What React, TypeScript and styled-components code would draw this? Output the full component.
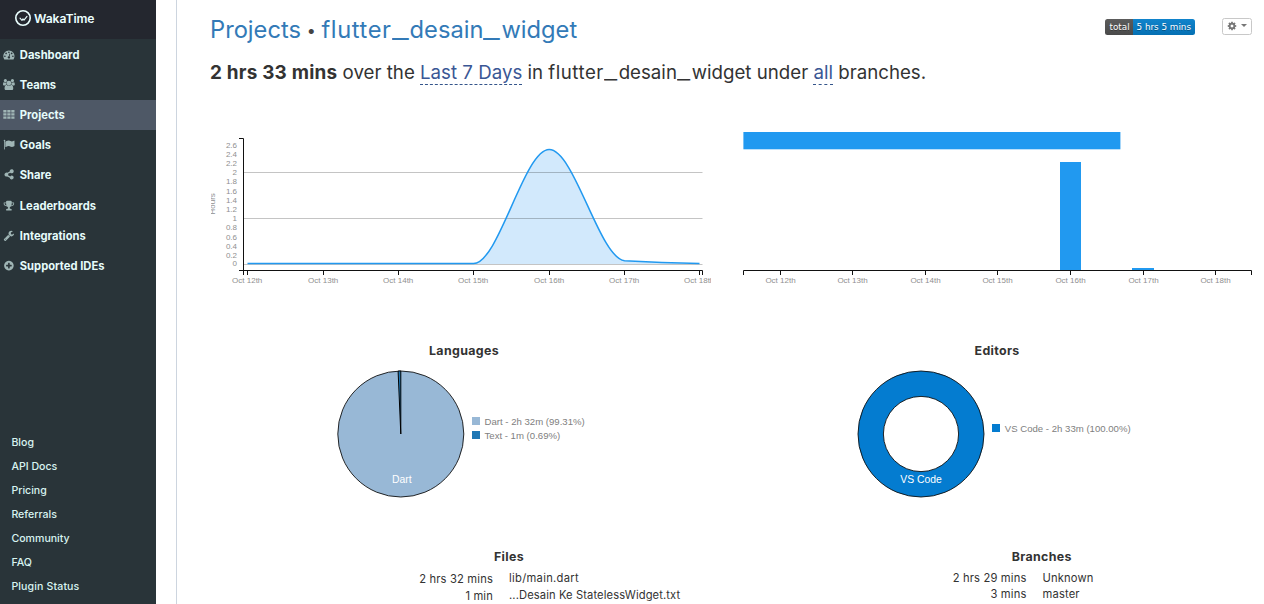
import React from 'react';
import styled, { createGlobalStyle } from 'styled-components';

const GlobalStyle = createGlobalStyle`
  * { box-sizing: border-box; }
  body { margin: 0; background: #fff; overflow: hidden; }
  a { color: inherit; text-decoration: none; }
`;

const Page = styled.div`
  display: flex;
  width: 1264px;
  height: 604px;
  overflow: hidden;
  font-family: Inter, "Liberation Sans", sans-serif;
  color: #333;
  white-space: nowrap;
`;

/* ---------- sidebar ---------- */

const Sidebar = styled.aside`
  display: flex;
  flex-direction: column;
  width: 156px;
  margin-right: 20px;
  background: #293439;
`;

const Brand = styled.a`
  display: flex;
  align-items: center;
  gap: 3px;
  height: 39px;
  padding: 0 0 3px 15px;
  background: #24272f;
  color: #ebffff;
  font-size: 12.2px;
  font-weight: 600;
  letter-spacing: -0.1px;
  svg { display: block; }
`;

const Nav = styled.nav`
  display: flex;
  flex-direction: column;
  flex: 1;
  padding-top: 0.6px;
`;

const NavItem = styled.a<{ $active?: boolean }>`
  display: flex;
  align-items: center;
  gap: 5px;
  height: 30.2px;
  padding-left: 3px;
  background: ${p => (p.$active ? '#4e5866' : 'transparent')};
  color: #e6fcfb;
  font-size: 11.2px;
  font-weight: 700;
  svg { display: block; width: 11.8px; height: 11.2px; margin-bottom: 1px; fill: #9fb5b5; }
`;

const FootNav = styled.nav`
  display: flex;
  flex-direction: column;
  padding: 0 0 5px 11.4px;
`;

const FootLink = styled.a<{ $spacing?: number }>`
  height: 24px;
  line-height: 24px;
  color: #d8f3f0;
  font-size: 10.6px;
  font-weight: 500;
  letter-spacing: ${p => p.$spacing ?? 0}px;
`;

/* ---------- header ---------- */

const Main = styled.main`
  flex: 1;
  min-width: 0;
  padding: 0 0 0 33px;
  border-left: 1px solid #cdd5df;
`;

const Header = styled.header`
  display: flex;
  align-items: flex-start;
  height: 57px;
  padding: 15px 12px 0 0;
`;

const Title = styled.h1`
  flex: 1;
  margin: 0;
  color: #337ab7;
  font-size: 23.7px;
  line-height: 30px;
  font-weight: 400;
`;

const Bullet = styled.span`
  display: inline-block;
  width: 20.5px;
  color: #444;
  font-size: 16px;
  line-height: 20px;
  text-align: center;
  vertical-align: 2px;
`;

const Underscore = styled.span<{ $width: number }>`
  display: inline-block;
  width: ${p => p.$width}px;
  height: 1em;
  line-height: 1em;
  transform: scaleX(1.55);
  transform-origin: 0 50%;
`;

const Spaced = styled.span<{ $gap: number }>`
  letter-spacing: ${p => p.$gap}px;
`;

const Badge = styled.span`
  display: flex;
  height: 16px;
  margin: 4px 27px 0 0;
  overflow: hidden;
  border-radius: 2.5px;
  font: 8.8px/16px "DejaVu Sans", sans-serif;
  color: #fff;
  text-shadow: 0 1px 0 rgba(1, 1, 1, 0.3);
`;

const BadgePart = styled.span<{ $value?: boolean }>`
  width: ${p => (p.$value ? 62 : 28)}px;
  padding-left: ${p => (p.$value ? 3.5 : 4.5)}px;
  background: ${p => (p.$value ? 'linear-gradient(#1184cc, #0570b3)' : 'linear-gradient(#5c5c5c, #4a4a4a)')};
`;

const SettingsButton = styled.button`
  display: flex;
  align-items: center;
  justify-content: space-between;
  width: 30px;
  height: 17px;
  margin-top: 3px;
  padding: 0 4px 2px;
  border: 1px solid #c8c8c8;
  border-radius: 2.5px;
  background: #fff;
  svg { display: block; fill: #777; }
`;

const Caret = styled.span`
  border: 3.4px solid transparent;
  border-top-color: #777;
  border-bottom: 0;
`;

const Summary = styled.h2`
  height: 63px;
  margin: 0;
  font-size: 18.7px;
  line-height: 32px;
  font-weight: 400;
`;

const Total = styled.strong`
  font-size: 18.9px;
  font-weight: 700;
  letter-spacing: 0.22px;
`;

const Choice = styled.a`
  display: inline-block;
  height: 25px;
  line-height: 25px;
  border-bottom: 1px dashed #34558b;
  color: #3a5795;
`;

/* ---------- charts ---------- */

const ChartRow = styled.section`
  display: flex;
  height: 220px;
  padding-left: 1px;
  svg { display: block; }
`;

const PieRow = styled.section`
  display: flex;
  gap: 16px;
  height: 206px;
`;

const PiePanel = styled.div<{ $width: number }>`
  width: ${p => p.$width}px;
  svg { display: block; margin-top: 7px; }
`;

const PanelTitle = styled.h3<{ $shift?: number }>`
  margin: 0;
  padding-left: ${p => p.$shift ?? 0}px;
  font-size: 12.4px;
  line-height: 21px;
  font-weight: 700;
  letter-spacing: 0.35px;
`;

const AxisText = styled.text`
  font: 8px "Liberation Sans", Arial, sans-serif;
  fill: #8f8f8f;
`;

const LegendText = styled.text`
  font: 9.6px "Liberation Sans", Arial, sans-serif;
  fill: #808080;
`;

const SliceText = styled.text`
  font: 10.4px "Liberation Sans", Arial, sans-serif;
  fill: #fff;
  text-anchor: middle;
`;

/* ---------- tables ---------- */

const TableRow = styled.section`
  display: flex;
`;

const TablePanel = styled.div<{ $width: number }>`
  width: ${p => p.$width}px;
`;

const Columns = styled.div<{ $time: number }>`
  display: grid;
  grid-template-columns: ${p => p.$time}px auto;
  column-gap: 16px;
  justify-content: start;
`;

const Cells = styled.div<{ $pitch: number; $top: number; $right?: boolean }>`
  padding-top: ${p => p.$top}px;
  font-size: 11.2px;
  line-height: ${p => p.$pitch}px;
  letter-spacing: 0.16px;
  text-align: ${p => (p.$right ? 'right' : 'left')};
`;

const Icon = ({ d, vb = '0 0 1792 1792' }: { d: string; vb?: string }) => (
  <svg viewBox={vb}><path d={d} /></svg>
);

const icons = {
  dashboard: 'M384 1152q0-53-37.5-90.5t-90.5-37.5-90.5 37.5-37.5 90.5 37.5 90.5 90.5 37.5 90.5-37.5 37.5-90.5zm192-448q0-53-37.5-90.5t-90.5-37.5-90.5 37.5-37.5 90.5 37.5 90.5 90.5 37.5 90.5-37.5 37.5-90.5zm428 481l101-382q6-26-7.5-48.5t-38.5-29.5-48 6.5-30 39.5l-101 382q-60 5-107 43.5t-63 98.5q-20 77 20 146t117 89 146-20 89-117q16-60-6-117t-72-91zm660-33q0-53-37.5-90.5t-90.5-37.5-90.5 37.5-37.5 90.5 37.5 90.5 90.5 37.5 90.5-37.5 37.5-90.5zm-640-640q0-53-37.5-90.5t-90.5-37.5-90.5 37.5-37.5 90.5 37.5 90.5 90.5 37.5 90.5-37.5 37.5-90.5zm448 192q0-53-37.5-90.5t-90.5-37.5-90.5 37.5-37.5 90.5 37.5 90.5 90.5 37.5 90.5-37.5 37.5-90.5zm320 448q0 261-141 483-19 29-54 29h-1402q-35 0-54-29-141-221-141-483 0-182 71-348t191-286 286-191 348-71 348 71 286 191 191 286 71 348z',
  users: 'M593 896q-162 5-265 128h-134q-82 0-138-40.5t-56-118.5q0-353 124-353 6 0 43.5 21t97.5 42.5 119 21.5q67 0 133-23-5 37-5 66 0 139 81 256zm1071 637q0 120-73 189.5t-194 69.5h-874q-121 0-194-69.5t-73-189.5q0-53 3.5-103.5t14-109 26.5-108.5 43-97.5 62-81 85.5-53.5 111.5-20q10 0 43 21.5t73 48 107 48 135 21.5 135-21.5 107-48 73-48 43-21.5q61 0 111.5 20t85.5 53.5 62 81 43 97.5 26.5 108.5 14 109 3.5 103.5zm-1024-1277q0 106-75 181t-181 75-181-75-75-181 75-181 181-75 181 75 75 181zm704 384q0 159-112.5 271.5t-271.5 112.5-271.5-112.5-112.5-271.5 112.5-271.5 271.5-112.5 271.5 112.5 112.5 271.5zm576 225q0 78-56 118.5t-138 40.5h-134q-103-123-265-128 81-117 81-256 0-29-5-66 66 23 133 23 59 0 119-21.5t97.5-42.5 43.5-21q124 0 124 353zm-128-609q0 106-75 181t-181 75-181-75-75-181 75-181 181-75 181 75 75 181z',
  grid: 'M0 160h512v384H0zM640 160h512v384H640zM1280 160h512v384h-512zM0 672h512v384H0zM640 672h512v384H640zM1280 672h512v384h-512zM0 1184h512v384H0zM640 1184h512v384H640zM1280 1184h512v384h-512z',
  flag: 'M320 256q0 72-64 110v1266q0 13-9.5 22.5t-22.5 9.5h-64q-13 0-22.5-9.5t-9.5-22.5v-1266q-64-38-64-110 0-53 37.5-90.5t90.5-37.5 90.5 37.5 37.5 90.5zm1472 64v763q0 25-12.5 38.5t-39.5 27.5q-215 116-369 116-61 0-123.5-22t-108.5-48-115.5-48-142.5-22q-192 0-464 146-17 9-33 9-26 0-45-19t-19-45v-742q0-32 31-55 21-14 79-43 236-120 421-120 107 0 200 29t219 88q38 19 88 19 54 0 117.5-21t110-47 88-47 54.5-21q26 0 45 19t19 45z',
  share: 'M1344 1024a320 320 0 1 1-317 366l-398-199a320 320 0 1 1 0-590l398-199a320 320 0 1 1 96 190l-360 180a320 320 0 0 1 0 248l360 180q92-176 221-176z',
  trophy: 'M522 883q-74-162-74-371h-256v96q0 78 94.5 162t235.5 113zm1078-275v-96h-256q0 209-74 371 141-29 235.5-113t94.5-162zm128-128v128q0 71-41.5 143t-112 130-173 97.5-215.5 44.5q-42 54-95 95-38 34-52.5 72.5t-14.5 89.5q0 54 30.5 91t97.5 37q75 0 133.5 45.5t58.5 114.5v64q0 14-9 23t-23 9h-832q-14 0-23-9t-9-23v-64q0-69 58.5-114.5t133.5-45.5q67 0 97.5-37t30.5-91q0-51-14.5-89.5t-52.5-72.5q-53-41-95-95-113-5-215.5-44.5t-173-97.5-112-130-41.5-143v-128q0-40 28-68t68-28h288v-96q0-66 47-113t113-47h576q66 0 113 47t47 113v96h288q40 0 68 28t28 68z',
  wrench: 'M448 1472q0-26-19-45t-45-19-45 19-19 45 19 45 45 19 45-19 19-45zm644-420l-682 682q-37 37-90 37-52 0-91-37l-106-108q-38-36-38-90 0-53 38-91l681-681q39 98 114.5 173.5t173.5 114.5zm634-435q0 39-23 106-47 134-164.5 217.5t-258.5 83.5q-185 0-316.5-131.5t-131.5-316.5 131.5-316.5 316.5-131.5q58 0 121.5 16.5t107.5 46.5q16 11 16 28t-16 28l-293 169v224l193 107q5-3 79-48.5t135.5-81 70.5-35.5q15 0 23.5 10t8.5 25z',
  plus: 'M1344 960v-128q0-26-19-45t-45-19h-256v-256q0-26-19-45t-45-19h-128q-26 0-45 19t-19 45v256h-256q-26 0-45 19t-19 45v128q0 26 19 45t45 19h256v256q0 26 19 45t45 19h128q26 0 45-19t19-45v-256h256q26 0 45-19t19-45zm320-64q0 209-103 385.5t-279.5 279.5-385.5 103-385.5-103-279.5-279.5-103-385.5 103-385.5 279.5-279.5 385.5-103 385.5 103 279.5 279.5 103 385.5z',
  cog: 'M1152 896q0-106-75-181t-181-75-181 75-75 181 75 181 181 75 181-75 75-181zm512-109v222q0 12-8 23t-20 13l-185 28q-19 54-39 91 35 50 107 138 10 12 10 25t-9 23q-27 37-99 108t-94 71q-12 0-26-9l-138-108q-44 23-91 38-16 136-29 186-7 28-36 28h-222q-14 0-24.5-8.5t-11.5-21.5l-28-184q-49-16-90-37l-141 107q-10 9-25 9-14 0-25-11-126-114-165-168-7-10-7-23 0-12 8-23 15-21 51-66.5t54-70.5q-27-50-41-99l-183-27q-13-2-21-12.5t-8-23.5v-222q0-12 8-23t19-13l186-28q14-46 39-92-40-57-107-138-10-12-10-24 0-10 9-23 26-36 98.5-107.5t94.5-71.5q13 0 26 10l138 107q44-23 91-38 16-136 29-186 7-28 36-28h222q14 0 24.5 8.5t11.5 21.5l28 184q49 16 90 37l142-107q9-9 24-9 13 0 25 10 129 119 165 170 7 8 7 22 0 12-8 23-15 21-51 66.5t-54 70.5q26 50 41 98l183 28q13 2 21 12.5t8 23.5z',
};

const navItems: { label: string; icon: string; vb?: string; active?: boolean }[] = [
  { label: 'Dashboard', icon: icons.dashboard },
  { label: 'Teams', icon: icons.users, vb: '0 0 1920 1792' },
  { label: 'Projects', icon: icons.grid, active: true },
  { label: 'Goals', icon: icons.flag },
  { label: 'Share', icon: icons.share },
  { label: 'Leaderboards', icon: icons.trophy },
  { label: 'Integrations', icon: icons.wrench },
  { label: 'Supported IDEs', icon: icons.plus },
];

const footLinks = ['Blog', 'API Docs', 'Pricing', 'Referrals', 'Community', 'FAQ', 'Plugin Status'];
const days = ['12th', '13th', '14th', '15th', '16th', '17th', '18th'];
const lineTicks = [247.5, 323.5, 398.5, 473.5, 549.5, 624.5, 699.5];
const barTicks = [780.5, 852.5, 925.5, 997.5, 1070.5, 1143.5, 1215.5];
const hours = Array.from({ length: 14 }, (_, i) => i / 5);

const LineChart = () => (
  <svg width="500" height="180" viewBox="211 120 500 180">
    <path d="M247.5 263.7H473.5C498.7 263.7 524 149.6 549.2 149.6S599.5 258 624.5 260.7C649 262 675 263 699.5 263.7V264H247.5z" fill="#d2e9fc" />
    <path d="M244 172.5H702.5M244 218.5H702.5M244 264.5H702.5" stroke="#000" strokeOpacity=".23" fill="none" />
    <path d="M247.5 263.6H473.5C498.7 263.6 524 149.6 549.2 149.6S599.5 258 624.5 260.7C649 262 675 263 699.5 263.6" stroke="#2199f0" strokeWidth="1.5" fill="none" />
    <path d="M239 138.5H243.5V275M239 270.5H702.5V275" stroke="#111" fill="none" />
    {lineTicks.map(x => <path key={x} d={`M${x} 270V275`} stroke="#111" />)}
    {hours.map(h => (
      <AxisText key={h} x="237" y={266.6 - h * 46 + (h > 0 ? 0.6 : -0.4)} textAnchor="end">{h}</AxisText>
    ))}
    {days.map((d, i) => (
      <AxisText key={d} x={lineTicks[i] - 0.3} y="283" textAnchor="middle">Oct {d}</AxisText>
    ))}
    <AxisText transform="translate(215.2 214.5) rotate(-90)">Hours</AxisText>
  </svg>
);

const BarChart = () => (
  <svg width="553" height="180" viewBox="711 120 553 180">
    <rect x="743.4" y="132" width="377" height="17.3" fill="#2199f0" />
    <rect x="1060" y="162" width="21" height="108" fill="#2199f0" />
    <rect x="1132" y="268" width="22" height="2" fill="#2199f0" />
    <path d="M743.5 275V270.5H1251.5V275" stroke="#111" fill="none" />
    {barTicks.map(x => <path key={x} d={`M${x} 270V275`} stroke="#111" />)}
    {days.map((d, i) => (
      <AxisText key={d} x={barTicks[i]} y="283" textAnchor="middle">Oct {d}</AxisText>
    ))}
  </svg>
);

export default function App() {
  return (
    <>
      <GlobalStyle />
      <Page>
        <Sidebar>
          <Brand href="#">
            <svg width="16" height="16" viewBox="0 0 16 16" fill="none" stroke="#ebffff" strokeLinecap="round" strokeLinejoin="round">
              <circle cx="8" cy="8" r="7.2" strokeWidth="1.6" />
              <path d="M5 8.2L7 10.4L8 8.9L9 10.2L12 6.4" strokeWidth="1.1" />
            </svg>
            WakaTime
          </Brand>
          <Nav>
            {navItems.map(n => (
              <NavItem key={n.label} href="#" $active={n.active}>
                <Icon d={n.icon} vb={n.vb} />
                {n.label}
              </NavItem>
            ))}
          </Nav>
          <FootNav>
            {footLinks.map(l => <FootLink key={l} href="#" $spacing={l === 'Plugin Status' ? 0.12 : 0}>{l}</FootLink>)}
          </FootNav>
        </Sidebar>

        <Main>
          <Header>
            <Title>
              <a href="#">Projects</a>
              <Bullet>•</Bullet>
              <a href="#">
                <Spaced $gap={0.6}>flutter</Spaced><Underscore $width={18}>_</Underscore>desain<Underscore $width={18}>_</Underscore>widget
              </a>
            </Title>
            <Badge>
              <BadgePart>total</BadgePart>
              <BadgePart $value>5 hrs 5 mins</BadgePart>
            </Badge>
            <SettingsButton>
              <svg width="10" height="10" viewBox="0 0 1792 1792"><path d={icons.cog} /></svg>
              <Caret />
            </SettingsButton>
          </Header>

          <Summary>
            <Total>2 hrs 33 mins</Total> over the <Choice href="#">Last 7 Days</Choice> in{' '}
            <Spaced $gap={0.5}>flutter</Spaced><Underscore $width={14.8}>_</Underscore>desain<Underscore $width={14.8}>_</Underscore>widget under{' '}
            <Choice href="#">all</Choice> branches.
          </Summary>

          <ChartRow>
            <LineChart />
            <BarChart />
          </ChartRow>

          <PieRow>
            <PiePanel $width={504}>
              <PanelTitle $shift={219}>Languages</PanelTitle>
              <svg width="504" height="140" viewBox="210 368 504 140">
                <circle cx="400.8" cy="434" r="63" fill="#98b8d6" stroke="#111" strokeWidth=".9" />
                <path d="M400.8 434L398.1 371.1A63 63 0 0 1 400.8 371Z" fill="#1f77b4" stroke="#000" strokeWidth="1" />
                <SliceText x="401.8" y="483">Dart</SliceText>
                <rect x="472" y="417" width="8" height="8" fill="#98b8d6" />
                <LegendText x="484.5" y="425">Dart - 2h 32m (99.31%)</LegendText>
                <rect x="472" y="431" width="8" height="8" fill="#1f77b4" />
                <LegendText x="484.5" y="439">Text - 1m (0.69%)</LegendText>
              </svg>
            </PiePanel>
            <PiePanel $width={504}>
              <PanelTitle $shift={244.5}>Editors</PanelTitle>
              <svg width="504" height="140" viewBox="730 368 504 140">
                <circle cx="921" cy="434" r="50.3" fill="none" stroke="#047cd0" strokeWidth="25.4" />
                <circle cx="921" cy="434" r="63" fill="none" stroke="#111" strokeWidth=".9" />
                <circle cx="921" cy="434" r="37.6" fill="none" stroke="#111" strokeWidth=".9" />
                <SliceText x="921" y="483">VS Code</SliceText>
                <rect x="992" y="424" width="8" height="8" fill="#047cd0" />
                <LegendText x="1004.8" y="432">VS Code - 2h 33m (100.00%)</LegendText>
              </svg>
            </PiePanel>
          </PieRow>

          <TableRow>
            <TablePanel $width={520}>
              <PanelTitle $shift={283.9}>Files</PanelTitle>
              <Columns $time={283}>
                <Cells $right $top={4} $pitch={17}>2 hrs 32 mins<br />1 min</Cells>
                <Cells $top={2.5} $pitch={17.5}><Spaced $gap={0.3}>lib/main.dart</Spaced><br /><Spaced $gap={0.1}>...Desain Ke StatelessWidget.txt</Spaced></Cells>
              </Columns>
            </TablePanel>
            <TablePanel $width={520}>
              <PanelTitle $shift={281.7}>Branches</PanelTitle>
              <Columns $time={296.5}>
                <Cells $right $top={3} $pitch={16}>2 hrs 29 mins<br />3 mins</Cells>
                <Cells $top={3} $pitch={16}>Unknown<br />master</Cells>
              </Columns>
            </TablePanel>
          </TableRow>
        </Main>
      </Page>
    </>
  );
}
